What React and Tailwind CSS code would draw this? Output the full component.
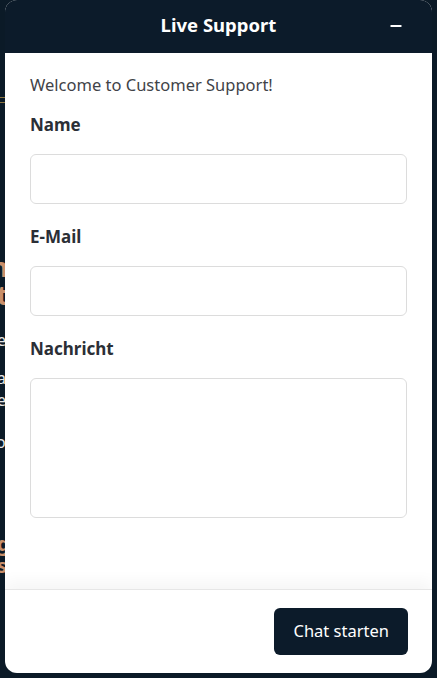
import { Minus } from 'lucide-react'

const font = { fontFamily: '"Noto Sans", "Open Sans", sans-serif' }

function Field({ label, children }) {
  return (
    <div>
      <label className="block text-[17px] font-bold text-[#2b2f36] leading-[24px]">{label}</label>
      <div className="mt-[17px]">{children}</div>
    </div>
  )
}

export default function App() {
  return (
    <div className="relative h-[678px] w-[437px] overflow-hidden bg-[#0b1a27]" style={font}>
      {/* page behind the widget, only its left edge shows */}
      <div className="pt-[97px]">
        <div className="h-[6px] w-[6px] border-y border-[#8a7440]" />
        <div className="mt-[150px] w-[8px] overflow-hidden text-[26px] font-bold leading-[28px] text-[#c98f6a] text-right whitespace-nowrap">
          <div className="-ml-[40px] w-[48px]">h</div>
          <div className="-ml-[40px] w-[48px]">t</div>
        </div>
        <div className="mt-[20px] w-[7px] overflow-hidden text-[16px] leading-[22px] text-[#e6e6e6] whitespace-nowrap">
          <div className="-ml-[3px]">e</div>
          <div className="-ml-[3px] mt-[16px]">a</div>
          <div className="-ml-[3px]">e</div>
          <div className="-ml-[4px] mt-[20px]">ol</div>
        </div>
        <div className="mt-[80px] w-[7px] overflow-hidden text-[20px] font-bold leading-[22px] text-[#c98f6a] whitespace-nowrap">
          <div className="-ml-[3px]">g</div>
          <div className="-ml-[3px]">s</div>
        </div>
      </div>

      {/* chat widget */}
      <div className="absolute left-[5px] top-0 flex h-[673px] w-[427px] flex-col overflow-hidden rounded-[12px] bg-white">
        <div className="relative flex h-[53px] shrink-0 items-center justify-center bg-[#0c1b2a] pb-[3px]">
          <span className="text-[18.5px] font-bold text-white">Live Support</span>
          <Minus className="absolute right-[28px] top-[18px] h-[16px] w-[16px] text-white" strokeWidth={3.2} />
        </div>

        <div className="flex flex-1 flex-col gap-[21px] px-[25px] pt-[19px]">
          <div className="flex flex-col gap-[15px]">
            <p className="text-[16.5px] leading-[26px] text-[#3f4348]">Welcome to Customer Support!</p>
            <Field label="Name">
              <input className="block h-[50px] w-full rounded-[6px] border border-[#dcdcdc] bg-white px-3 outline-none" />
            </Field>
          </div>
          <Field label="E-Mail">
            <input className="block h-[50px] w-full rounded-[6px] border border-[#dcdcdc] bg-white px-3 outline-none" />
          </Field>
          <Field label="Nachricht">
            <textarea className="block h-[140px] w-full resize-none rounded-[6px] border border-[#dcdcdc] bg-white px-3 py-2 outline-none" />
          </Field>
        </div>

        <div className="flex h-[84px] shrink-0 items-center justify-end border-t border-[#e6e6e6] px-[24px] shadow-[0_-8px_14px_rgba(0,0,0,0.04)]">
          <button className="h-[47px] rounded-[6px] bg-[#0c1b2a] px-[19px] text-[16.5px] text-white">Chat starten</button>
        </div>
      </div>
    </div>
  )
}
